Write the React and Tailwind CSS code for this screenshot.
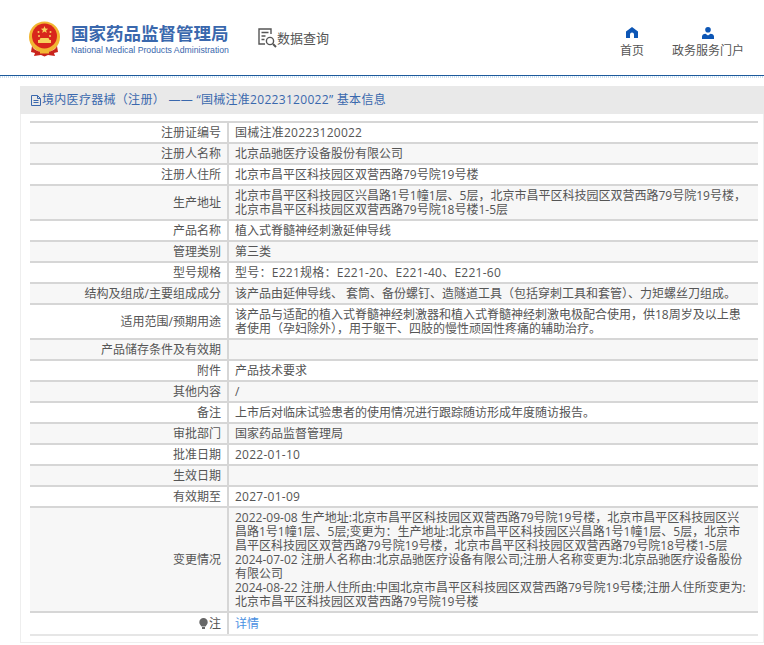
import React from "react";

const rows = [
  { label: "注册证编号", value: "国械注准20223120022", wide: true },
  { label: "注册人名称", value: "北京品驰医疗设备股份有限公司" },
  { label: "注册人住所", value: "北京市昌平区科技园区双营西路79号院19号楼" },
  {
    label: "生产地址",
    value:
      "北京市昌平区科技园区兴昌路1号1幢1层、5层，北京市昌平区科技园区双营西路79号院19号楼，北京市昌平区科技园区双营西路79号院18号楼1-5层",
  },
  { label: "产品名称", value: "植入式脊髓神经刺激延伸导线" },
  { label: "管理类别", value: "第三类" },
  { label: "型号规格", value: "型号：E221规格：E221-20、E221-40、E221-60", wide: true },
  {
    label: "结构及组成/主要组成成分",
    value: "该产品由延伸导线、 套筒、备份螺钉、造隧道工具（包括穿刺工具和套管）、力矩螺丝刀组成。",
  },
  {
    label: "适用范围/预期用途",
    value:
      "该产品与适配的植入式脊髓神经刺激器和植入式脊髓神经刺激电极配合使用，供18周岁及以上患者使用（孕妇除外），用于躯干、四肢的慢性顽固性疼痛的辅助治疗。",
  },
  { label: "产品储存条件及有效期", value: "" },
  { label: "附件", value: "产品技术要求" },
  { label: "其他内容", value: "/" },
  { label: "备注", value: "上市后对临床试验患者的使用情况进行跟踪随访形成年度随访报告。" },
  { label: "审批部门", value: "国家药品监督管理局" },
  { label: "批准日期", value: "2022-01-10", wide: true },
  { label: "生效日期", value: "" },
  { label: "有效期至", value: "2027-01-09", wide: true },
];

const Emblem = () => (
  <svg width="34" height="36" viewBox="0 0 34 36">
    <circle cx="16.500" cy="16" r="15.500" fill="#f2b632" />
    <circle cx="16.500" cy="15" r="12.500" fill="#d8261c" />
    <path d="M16.500 5l1 2.600 2.700.1-2.100 1.700.7 2.600-2.300-1.500-2.300 1.500.7-2.600-2.100-1.700 2.700-.1z" fill="#f7d25c" />
    <circle cx="10.500" cy="11" r="1" fill="#f7d25c" />
    <circle cx="22.500" cy="11" r="1" fill="#f7d25c" />
    <circle cx="11" cy="15" r="1" fill="#f7d25c" />
    <circle cx="22" cy="15" r="1" fill="#f7d25c" />
    <path d="M10 22v-3h1.500l1-2h8l1 2H23v3z" fill="#f7d25c" />
    <path d="M4 25c2 4 6 6 12.500 6S27 29 29 25l1 6-4 1 1 3-7-1-3.500 1.500L13 34l-7 1 1-3-4-1z" fill="#c9231b" />
    <rect x="12" y="30" width="9" height="2.500" fill="#f2b632" />
  </svg>
);

const HomeIcon = () => (
  <svg width="12" height="11" viewBox="0 0 12 11" fill="#0d56b5">
    <path d="M6 0L0 4.500V11h4V7.500a2 2 0 0 1 4 0V11h4V4.500z" />
  </svg>
);

const PersonIcon = () => (
  <svg width="12" height="12" viewBox="0 0 12 12" fill="#0d56b5">
    <circle cx="6" cy="2.800" r="2.800" />
    <path d="M0 12V9.500C0 8 1.500 7 3.500 6.800L6 8.500l2.500-1.700C10.500 7 12 8 12 9.500V12z" />
  </svg>
);

const App = () => {
  return (
    <div className="w-[764px] h-[645px] overflow-hidden bg-white font-['Open_Sans','Noto_Sans_CJK_SC',sans-serif] text-[12px] text-[#555]">
      {/* top bar */}
      <div className="h-[76px] flex items-start border-b border-[#1d5a9c]">
        <div className="ml-[28px] mt-[21px]">
          <Emblem />
        </div>
        <div className="ml-[9px] mt-[22px] flex flex-col w-[160px]">
          <div className="text-[17.500px] leading-[22px] font-bold text-[#3a68ad] whitespace-nowrap">国家药品监督管理局</div>
          <div className="font-['Liberation_Sans',sans-serif] text-[8.700px] leading-[11px] mt-[1px] text-[#3a68ad] whitespace-nowrap">
            National Medical Products Administration
          </div>
        </div>
        <div className="ml-[27px] mt-[28px] flex items-center">
          <svg width="20" height="20" viewBox="0 0 20 20" fill="none" stroke="#555" strokeWidth="1.400">
            <path d="M13 6V1H1v15h6" />
            <path d="M3.500 4.500h7M3.500 8h4M3.500 11.500h3" />
            <circle cx="12" cy="13" r="3.600" />
            <path d="M15 16l3 3" strokeWidth="2" />
          </svg>
          <span className="text-[13px] leading-[18px] -ml-[1px]">数据查询</span>
        </div>
        <div className="ml-auto mt-[27px] flex items-start">
          <div className="w-[26px] flex flex-col items-center">
            <HomeIcon />
            <span className="text-[12px] leading-[16px] mt-[5px] whitespace-nowrap">首页</span>
          </div>
          <div className="w-[72px] ml-[27px] mr-[20px] flex flex-col items-center">
            <PersonIcon />
            <span className="text-[12px] leading-[16px] mt-[4px] whitespace-nowrap">政务服务门户</span>
          </div>
        </div>
      </div>
      <div className="h-[2px] bg-[repeating-linear-gradient(90deg,#cfe0ee_0_1px,#fff_1px_2px)]"></div>

      <div className="ml-[20px] mt-[8px] h-[557px] border border-[#eee] border-t-0">
        <div className="h-[28px] -mx-[1px] bg-[#e9e9e9] flex items-center pl-[11px] text-[12px] tracking-[0.300px] text-[#3a68ad] whitespace-pre">
          <svg width="10" height="11" viewBox="0 0 10 11" fill="none" stroke="#3a68ad" className="mr-[1px]">
            <path d="M.500.500h6v3h3v7h-9zM6.500.500l3 3M2.500 5.500h5M2.500 7.500h5" />
          </svg>
          境内医疗器械（注册） —— “国械注准20223120022” 基本信息
        </div>
        <table className="ml-[9px] mt-[7px] w-[728px] border-collapse table-fixed">
          <tbody>
            {rows.map((row, i) => (
              <tr key={row.label} className={i % 2 === 1 ? "bg-[#f7f7f7]" : ""}>
                <td className="w-[198px] h-[21px] border-y-2 border-r-2 border-[#d6d6d6] pr-[6px] text-right leading-[14px]">
                  {row.label}
                </td>
                <td
                  className={
                    row.wide
                      ? "h-[21px] border-y-2 border-[#d6d6d6] pl-[6px] pr-[8px] py-[2.500px] leading-[14px] tracking-[0.250px]"
                      : "h-[21px] border-y-2 border-[#d6d6d6] pl-[6px] pr-[8px] py-[2.500px] leading-[14px]"
                  }
                >
                  {row.value}
                </td>
              </tr>
            ))}
            <tr className="bg-[#f7f7f7]">
              <td className="border-y-2 border-r-2 border-[#d6d6d6] pr-[6px] text-right">变更情况</td>
              <td className="border-y-2 border-[#d6d6d6] pl-[6px] pr-[8px] py-[2.500px] leading-[14px]">
                2022-09-08 生产地址:北京市昌平区科技园区双营西路79号院19号楼，北京市昌平区科技园区兴昌路1号1幢1层、5层;变更为：生产地址:北京市昌平区科技园区兴昌路1号1幢1层、5层，北京市昌平区科技园区双营西路79号院19号楼，北京市昌平区科技园区双营西路79号院18号楼1-5层
                <br />
                2024-07-02 注册人名称由:北京品驰医疗设备有限公司;注册人名称变更为:北京品驰医疗设备股份有限公司
                <br />
                2024-08-22 注册人住所由:中国北京市昌平区科技园区双营西路79号院19号楼;注册人住所变更为:北京市昌平区科技园区双营西路79号院19号楼
              </td>
            </tr>
            <tr>
              <td className="h-[23px] border-t-2 border-b-2 border-b-[#e6e6e6] border-t-[#d6d6d6] border-r-2 border-r-[#d6d6d6] pr-[6px] text-right">
                <svg width="9" height="11" viewBox="0 0 9 11" fill="#666" className="inline-block mr-[1px] align-[-1px]">
                  <path d="M4.500 0a4.200 4.200 0 0 1 4.200 4.200c0 1.800-1.300 2.800-2.200 4.300h-4C1.600 7 .3 6 .3 4.200A4.200 4.200 0 0 1 4.500 0z" />
                  <rect x="3" y="9" width="3" height="2" />
                </svg>
                注
              </td>
              <td className="h-[23px] border-t-2 border-b-2 border-b-[#e6e6e6] border-t-[#d6d6d6] pl-[6px] text-[#4a90e2]">详情</td>
            </tr>
          </tbody>
        </table>
      </div>
    </div>
  );
};

export default App;
